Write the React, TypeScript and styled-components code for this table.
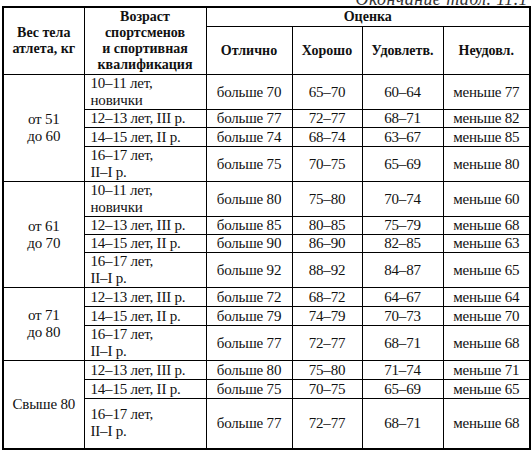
import React from "react";
import styled, { createGlobalStyle } from "styled-components";

const SERIF = `"Liberation Serif", "Times New Roman", "DejaVu Serif", serif`;

const GlobalStyle = createGlobalStyle`
  html, body {
    margin: 0;
    padding: 0;
    background: #fff;
  }
  body, table, th, td {
    font-family: ${SERIF};
    color: #111;
  }
`;

interface Row {
  age: string[];
  values: string[];
  height: number;
}

interface Group {
  weight: string[];
  rows: Row[];
}

const groups: Group[] = [
  {
    weight: ["от 51", "до 60"],
    rows: [
      { age: ["10–11 лет,", "новички"], values: ["больше 70", "65–70", "60–64", "меньше 77"], height: 33 },
      { age: ["12–13 лет, III р."], values: ["больше 77", "72–77", "68–71", "меньше 82"], height: 18 },
      { age: ["14–15 лет, II р."], values: ["больше 74", "68–74", "63–67", "меньше 85"], height: 19 },
      { age: ["16–17 лет,", "II–I р."], values: ["больше 75", "70–75", "65–69", "меньше 80"], height: 35 },
    ],
  },
  {
    weight: ["от 61", "до 70"],
    rows: [
      { age: ["10–11 лет,", "новички"], values: ["больше 80", "75–80", "70–74", "меньше 60"], height: 35 },
      { age: ["12–13 лет, III р."], values: ["больше 85", "80–85", "75–79", "меньше 68"], height: 18 },
      { age: ["14–15 лет, II р."], values: ["больше 90", "86–90", "82–85", "меньше 63"], height: 18 },
      { age: ["16–17 лет,", "II–I р."], values: ["больше 92", "88–92", "84–87", "меньше 65"], height: 35 },
    ],
  },
  {
    weight: ["от 71", "до 80"],
    rows: [
      { age: ["12–13 лет, III р."], values: ["больше 72", "68–72", "64–67", "меньше 64"], height: 19 },
      { age: ["14–15 лет, II р."], values: ["больше 79", "74–79", "70–73", "меньше 70"], height: 19 },
      { age: ["16–17 лет,", "II–I р."], values: ["больше 77", "72–77", "68–71", "меньше 68"], height: 33 },
    ],
  },
  {
    weight: ["Свыше 80"],
    rows: [
      { age: ["12–13 лет, III р."], values: ["больше 80", "75–80", "71–74", "меньше 71"], height: 19 },
      { age: ["14–15 лет, II р."], values: ["больше 75", "70–75", "65–69", "меньше 65"], height: 19 },
      { age: ["16–17 лет,", "II–I р."], values: ["больше 77", "72–77", "68–71", "меньше 68"], height: 50 },
    ],
  },
];

const grades = ["Отлично", "Хорошо", "Удовлетв.", "Неудовл."];
const colWidths = [81, 122, 86, 70, 81, 87];

const Page = styled.div`
  width: 531px;
  padding-left: 2px;
  box-sizing: border-box;
`;

const Caption = styled.div`
  height: 6px;
  overflow: hidden;
  display: flex;
  justify-content: flex-end;
  align-items: flex-end;
  padding-right: 3px;
  span {
    font-family: ${SERIF};
    font-style: italic;
    font-size: 18px;
    line-height: 14px;
    letter-spacing: 0.4px;
    color: #333;
  }
`;

const Table = styled.table`
  border-collapse: collapse;
  table-layout: fixed;
  width: 527px;
  border: 2px solid #000;
`;

const HeadCell = styled.th<{ $h?: number }>`
  border: 1px solid #000;
  font-family: ${SERIF};
  font-weight: bold;
  font-size: 14px;
  line-height: 16px;
  text-align: center;
  vertical-align: middle;
  padding: 0 4px;
  height: ${(p) => (p.$h ? `${p.$h}px` : "auto")};
  color: #111;
`;

const Tr = styled.tr<{ $h: number }>`
  height: ${(p) => p.$h}px;
`;

const Cell = styled.td<{ $left?: boolean }>`
  border: 1px solid #000;
  font-family: ${SERIF};
  font-size: 15px;
  letter-spacing: -0.2px;
  line-height: 17px;
  text-align: ${(p) => (p.$left ? "left" : "center")};
  vertical-align: middle;
  padding: 0 ${(p) => (p.$left ? "6px" : "2px")};
  white-space: nowrap;
  color: #111;
`;

const Lines = ({ lines }: { lines: string[] }) => (
  <>
    {lines.map((l, i) => (
      <React.Fragment key={i}>
        {i > 0 && <br />}
        {l}
      </React.Fragment>
    ))}
  </>
);

export default function App() {
  return (
    <Page>
      <GlobalStyle />
      <Caption>
        <span>Окончание табл. 11.1</span>
      </Caption>
      <Table>
        <colgroup>
          {colWidths.map((w, i) => (
            <col key={i} style={{ width: w }} />
          ))}
        </colgroup>
        <thead>
          <tr>
            <HeadCell rowSpan={2}>
              <Lines lines={["Вес тела", "атлета, кг"]} />
            </HeadCell>
            <HeadCell rowSpan={2}>
              <Lines lines={["Возраст", "спортсменов", "и спортивная", "квалификация"]} />
            </HeadCell>
            <HeadCell colSpan={4} $h={18}>
              Оценка
            </HeadCell>
          </tr>
          <tr>
            {grades.map((g) => (
              <HeadCell key={g} $h={47}>
                {g}
              </HeadCell>
            ))}
          </tr>
        </thead>
        <tbody>
          {groups.map((group, gi) =>
            group.rows.map((row, ri) => (
              <Tr key={`${gi}-${ri}`} $h={row.height}>
                {ri === 0 && (
                  <Cell rowSpan={group.rows.length}>
                    <Lines lines={group.weight} />
                  </Cell>
                )}
                <Cell $left>
                  <Lines lines={row.age} />
                </Cell>
                {row.values.map((v, vi) => (
                  <Cell key={vi}>{v}</Cell>
                ))}
              </Tr>
            ))
          )}
        </tbody>
      </Table>
    </Page>
  );
}
